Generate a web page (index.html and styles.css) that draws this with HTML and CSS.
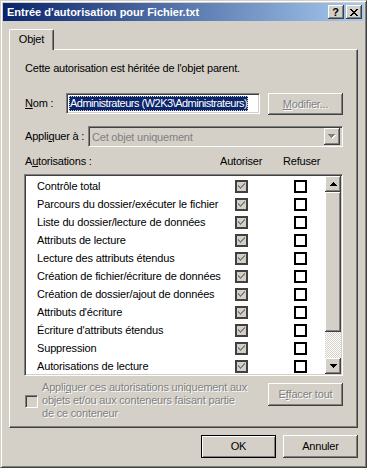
FILE: index.html
```html
<!DOCTYPE html>
<html lang="fr">
<head>
<meta charset="utf-8">
<title>Entrée d'autorisation pour Fichier.txt</title>
<link rel="stylesheet" href="styles.css">
</head>
<body>
<div class="window">
  <div class="titlebar">
    <span class="title">Entrée d'autorisation pour Fichier.txt</span>
    <span class="cbtn cbtn-help">?</span>
    <span class="cbtn cbtn-close">
      <svg width="8" height="7" viewBox="0 0 8 7" shape-rendering="crispEdges"><path d="M0 0h2v1h-2zM6 0h2v1h-2zM1 1h2v1h-2zM5 1h2v1h-2zM2 2h4v1h-4zM3 3h2v1h-2zM2 4h4v1h-4zM1 5h2v1h-2zM5 5h2v1h-2zM0 6h2v1h-2zM6 6h2v1h-2z" fill="#000"/></svg>
    </span>
  </div>
  <div class="client">
    <div class="tabs"><div class="tab">Objet</div></div>
    <div class="pane">
      <p class="inherit">Cette autorisation est héritée de l'objet parent.</p>
      <div class="row row-name">
        <span class="lbl lbl-nom"><u>N</u>om :</span>
        <div class="field"><span class="sel">Administrateurs (W2K3\Administrateurs)</span></div>
        <span class="btn btn-modify disabled"><u>M</u>odifier...</span>
      </div>
      <div class="row row-apply">
        <span class="lbl lbl-apply">Appli<u>q</u>uer à :</span>
        <div class="combo">
          <span class="combo-text">Cet objet uniquement</span>
          <span class="combo-btn">
            <svg width="8" height="5" viewBox="0 0 8 5" shape-rendering="crispEdges"><path d="M1 1h7v1h-1v1h-1v1h-1v1h-1v-1h-1v-1h-1v-1h-1z" fill="#fff"/><path d="M0 0h7v1h-1v1h-1v1h-1v1h-1v-1h-1v-1h-1v-1h-1z" fill="#808080"/></svg>
          </span>
        </div>
      </div>
      <div class="perm-head">
        <span class="lbl">A<u>u</u>torisations :</span>
        <span>Autoriser</span>
        <span>Refuser</span>
      </div>
      <div class="list">
        <div class="rows">
          <div class="prow"><span>Contrôle total</span><span class="chk chk-on"></span><span></span><span class="chk"></span></div>
          <div class="prow"><span>Parcours du dossier/exécuter le fichier</span><span class="chk chk-on"></span><span></span><span class="chk"></span></div>
          <div class="prow"><span>Liste du dossier/lecture de données</span><span class="chk chk-on"></span><span></span><span class="chk"></span></div>
          <div class="prow"><span>Attributs de lecture</span><span class="chk chk-on"></span><span></span><span class="chk"></span></div>
          <div class="prow"><span>Lecture des attributs étendus</span><span class="chk chk-on"></span><span></span><span class="chk"></span></div>
          <div class="prow"><span>Création de fichier/écriture de données</span><span class="chk chk-on"></span><span></span><span class="chk"></span></div>
          <div class="prow"><span>Création de dossier/ajout de données</span><span class="chk chk-on"></span><span></span><span class="chk"></span></div>
          <div class="prow"><span>Attributs d'écriture</span><span class="chk chk-on"></span><span></span><span class="chk"></span></div>
          <div class="prow"><span>Écriture d'attributs étendus</span><span class="chk chk-on"></span><span></span><span class="chk"></span></div>
          <div class="prow"><span>Suppression</span><span class="chk chk-on"></span><span></span><span class="chk"></span></div>
          <div class="prow"><span>Autorisations de lecture</span><span class="chk chk-on"></span><span></span><span class="chk"></span></div>
        </div>
        <div class="vscroll">
          <span class="sbtn">
            <svg width="7" height="4" viewBox="0 0 7 4" shape-rendering="crispEdges"><path d="M3 0h1v1h1v1h1v1h1v1h-7v-1h1v-1h1v-1h1z" fill="#000"/></svg>
          </span>
          <span class="thumb"></span>
          <span class="track"></span>
          <span class="sbtn">
            <svg width="7" height="4" viewBox="0 0 7 4" shape-rendering="crispEdges"><path d="M0 0h7v1h-1v1h-1v1h-1v1h-1v-1h-1v-1h-1v-1h-1z" fill="#000"/></svg>
          </span>
        </div>
      </div>
      <div class="row row-bottom">
        <span class="chk3d"></span>
        <span class="disabled-text">Appli<u>q</u>uer ces autorisations uniquement aux<br>objets et/ou aux conteneurs faisant partie<br>de ce conteneur</span>
        <span class="btn btn-clear disabled">E<u>f</u>facer tout</span>
      </div>
    </div>
    <div class="footer">
      <span class="btn btn-default">OK</span>
      <span class="btn">Annuler</span>
    </div>
  </div>
</div>
</body>
</html>
```

FILE: styles.css
```css
* { box-sizing: border-box; }

body {
  margin: 0;
  background: #d4d0c8;
  font-family: "Liberation Sans", Arial, sans-serif;
  font-size: 11px;
  letter-spacing: -0.2px;
  color: #000;
}

.window {
  width: 367px;
  height: 468px;
  background: #d4d0c8;
  border: 1px solid;
  border-color: #d4d0c8 #404040 #404040 #d4d0c8;
  box-shadow: inset 1px 1px #fff, inset -1px -1px #808080;
  padding: 2px;
  display: flex;
  flex-direction: column;
}

.titlebar {
  height: 18px;
  flex: none;
  background: linear-gradient(to right, #0a246a, #a6caf0);
  display: flex;
  align-items: center;
  padding: 0 2px 0 2px;
}

.title {
  flex: 1;
  color: #fff;
  font-weight: bold;
  font-size: 11px;
  letter-spacing: 0;
  padding-left: 2px;
  white-space: nowrap;
}

.cbtn {
  width: 16px;
  height: 14px;
  background: #d4d0c8;
  box-shadow: inset -1px -1px #404040, inset 1px 1px #fff, inset -2px -2px #808080;
  display: flex;
  align-items: center;
  justify-content: center;
  font-weight: bold;
  font-size: 11px;
  line-height: 14px;
}
.cbtn-help { padding: 0 1px 1px 0; }
.cbtn-close { margin-left: 2px; padding-right: 1px; }

.client {
  flex: 1;
  display: flex;
  flex-direction: column;
  padding: 8px 6px 0 6px;
}

.tabs {
  display: flex;
  height: 20px;
}

.tab {
  position: relative;
  z-index: 1;
  width: 45px;
  height: 21px;
  background: #d4d0c8;
  border-top: 1px solid #fff;
  border-left: 1px solid #fff;
  border-right: 1px solid #404040;
  box-shadow: inset -1px 0 #808080;
  border-radius: 2px 2px 0 0;
  padding-top: 3px;
  line-height: 13px;
  text-align: center;
}

.pane {
  height: 379px;
  border: 1px solid;
  border-color: #fff #404040 #404040 #fff;
  box-shadow: inset -1px -1px #808080;
  padding: 12px 14px 0 14px;
  display: flex;
  flex-direction: column;
}

.inherit {
  margin: 0 0 0 1px;
  line-height: 13px;
  height: 13px;
}

.row { display: flex; }

.lbl { margin-left: 1px; line-height: 13px; }

.row-name {
  margin-top: 18px;
  height: 22px;
  align-items: flex-start;
}
.lbl-nom { width: 41px; padding-top: 4px; }

.field {
  width: 194px;
  height: 21px;
  background: #fff;
  border: 1px solid;
  border-color: #808080 #fff #fff #808080;
  box-shadow: inset 1px 1px #404040, inset -1px -1px #d4d0c8;
  padding: 2px 0 0 2px;
  overflow: hidden;
}

.sel {
  display: inline-block;
  background: #0a246a;
  color: #fff;
  line-height: 15px;
  height: 15px;
  padding: 0 1px;
  letter-spacing: -0.5px;
  white-space: nowrap;
  outline: 1px dotted #d4d0c8;
  outline-offset: -1px;
}

.btn {
  width: 75px;
  height: 23px;
  display: flex;
  align-items: center;
  justify-content: center;
  background: #d4d0c8;
  box-shadow: inset -1px -1px #404040, inset 1px 1px #fff, inset -2px -2px #808080;
  line-height: 13px;
  white-space: nowrap;
}

.btn.disabled, .disabled-text {
  color: #808080;
  text-shadow: 1px 1px #fff;
}

.btn-modify { margin-left: 8px; height: 22px; }

.btn-default {
  border: 1px solid #000;
  box-shadow: inset 1px 1px #fff, inset -1px -1px #808080;
}

.row-apply {
  margin-top: 11px;
  height: 21px;
  align-items: center;
}
.lbl-apply { width: 63px; }

.combo {
  width: 255px;
  height: 21px;
  border: 1px solid;
  border-color: #808080 #fff #fff #808080;
  box-shadow: inset 1px 1px #404040, inset -1px -1px #d4d0c8;
  background: #d4d0c8;
  padding: 2px;
  display: flex;
  align-items: center;
}
.combo-text {
  flex: 1;
  color: #808080;
  padding-left: 1px;
}
.combo-btn {
  width: 16px;
  height: 17px;
  background: #d4d0c8;
  box-shadow: inset -1px -1px #404040, inset 1px 1px #fff, inset -2px -2px #808080;
  display: flex;
  align-items: center;
  justify-content: center;
  padding-bottom: 1px;
}

.perm-head {
  margin-top: 8px;
  display: grid;
  grid-template-columns: 196px 63px auto;
  line-height: 13px;
}

.list {
  margin-top: 6px;
  width: 319px;
  height: 202px;
  flex: none;
  display: flex;
  background: #fff;
  border: 1px solid;
  border-color: #808080 #fff #fff #808080;
  box-shadow: inset 1px 1px #404040, inset -1px -1px #d4d0c8;
  padding: 1px;
}

.rows {
  flex: 1;
  padding-top: 1px;
  overflow: hidden;
}

.prow {
  height: 18px;
  display: grid;
  grid-template-columns: 198px 13px 46px 13px;
  align-items: center;
  padding-left: 11px;
  letter-spacing: -0.15px;
  white-space: nowrap;
}

.chk {
  width: 13px;
  height: 13px;
  border: 2px solid #000;
  background: #fff;
}

.chk-on {
  border-color: #404040;
  background: #d4d0c8 url("data:image/svg+xml,%3Csvg xmlns='http://www.w3.org/2000/svg' width='9' height='9' viewBox='0 0 9 9' shape-rendering='crispEdges'%3E%3Cpath d='M7 1h1v1h-1zM6 2h2v1h-2zM1 3h1v1h-1zM5 3h2v1h-2zM1 4h2v1h-2zM4 4h2v1h-2zM2 5h3v1h-3zM3 6h1v1h-1z' fill='%23808080'/%3E%3C/svg%3E") 0 0 / 9px 9px no-repeat;
}

.vscroll {
  width: 16px;
  display: flex;
  flex-direction: column;
}

.sbtn {
  height: 16px;
  flex: none;
  background: #d4d0c8;
  box-shadow: inset -1px -1px #404040, inset 1px 1px #fff, inset -2px -2px #808080;
  display: flex;
  align-items: center;
  justify-content: center;
}

.thumb {
  height: 140px;
  flex: none;
  background: #d4d0c8;
  box-shadow: inset -1px -1px #404040, inset 1px 1px #fff, inset -2px -2px #808080;
}

.track {
  flex: 1;
  background: repeating-conic-gradient(#d4d0c8 0 25%, #fff 0 50%) 0 0 / 2px 2px;
}

.row-bottom {
  margin-top: 5px;
  align-items: flex-start;
}

.chk3d {
  width: 13px;
  height: 13px;
  margin: 14px 0 0 1px;
  flex: none;
  background: #d4d0c8;
  border: 1px solid;
  border-color: #808080 #fff #fff #808080;
  box-shadow: inset 1px 1px #404040, inset -1px -1px #d4d0c8;
}

.disabled-text {
  margin-left: 4px;
  line-height: 13px;
  white-space: nowrap;
}

.btn-clear {
  margin-left: auto;
  margin-top: 2px;
}

.footer {
  margin-top: 7px;
  display: flex;
  justify-content: flex-end;
  gap: 7px;
}
```
